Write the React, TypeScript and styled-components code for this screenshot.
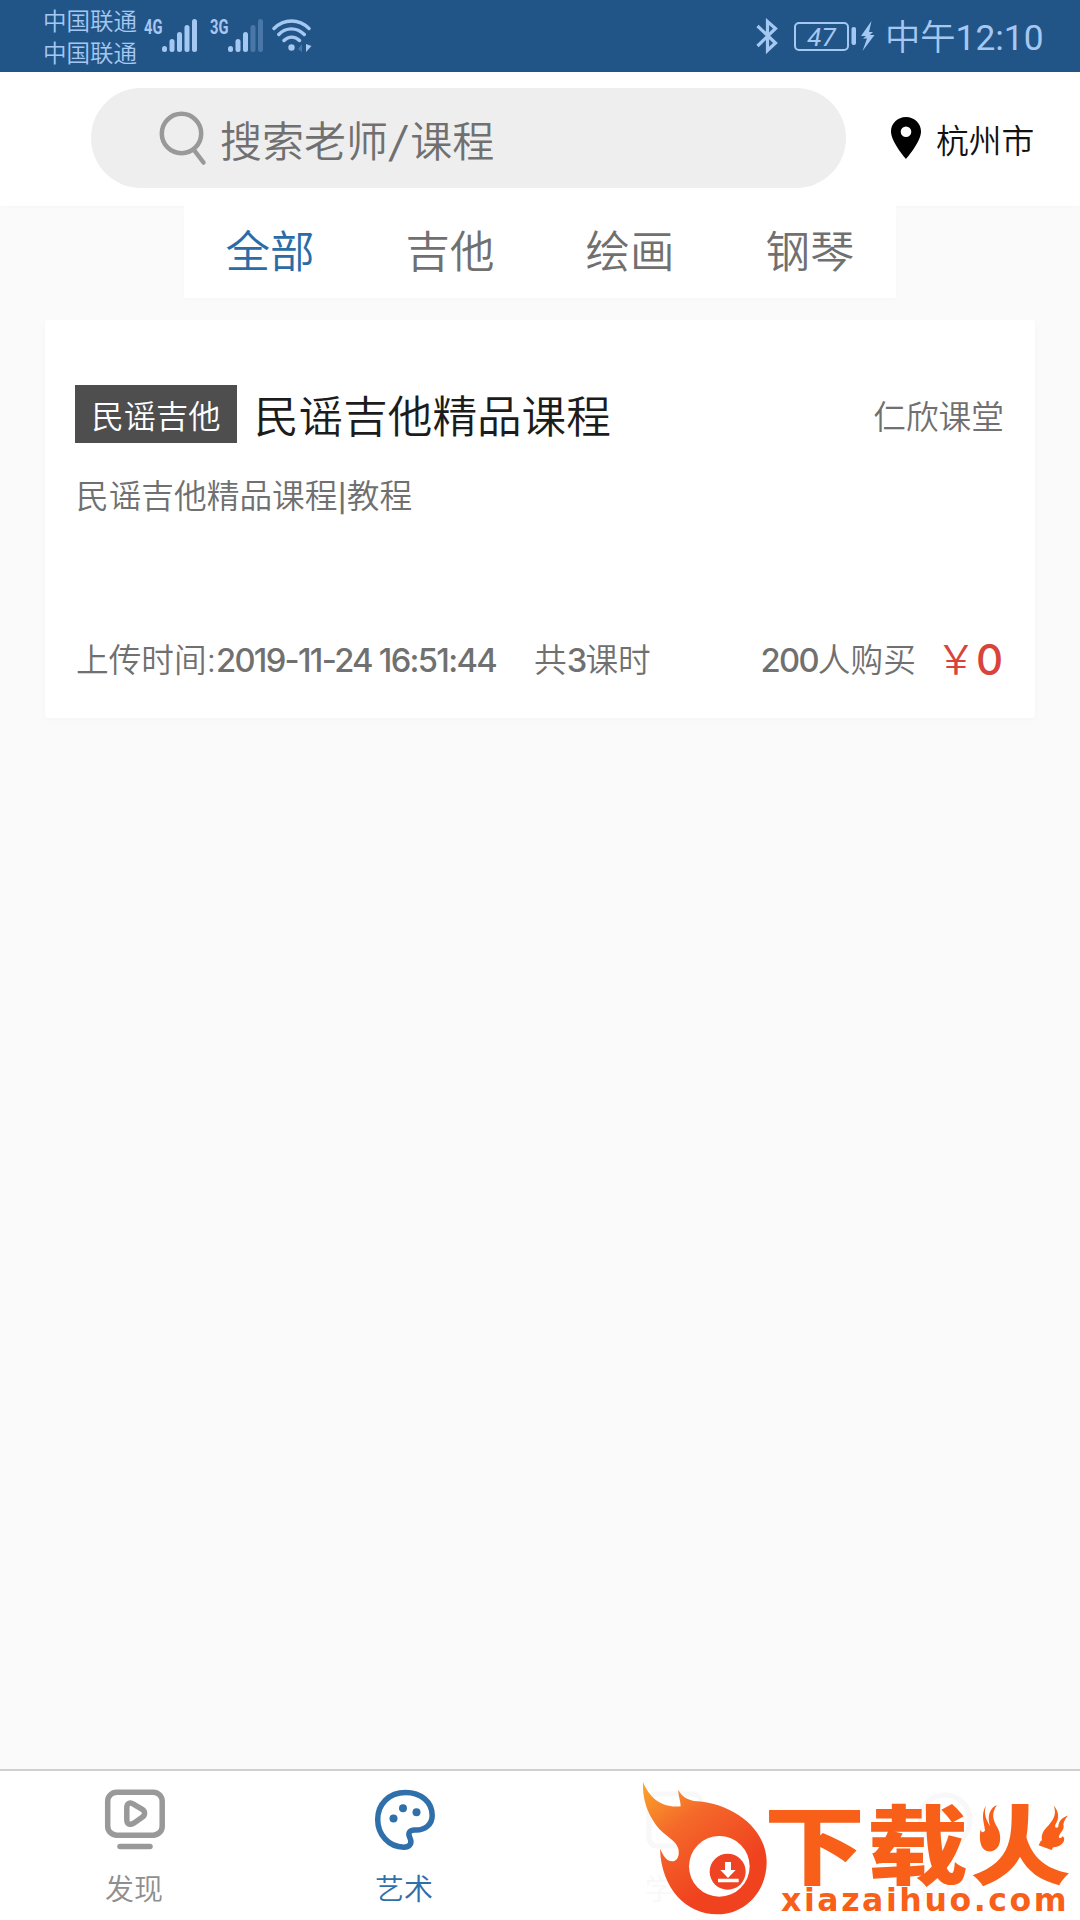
import styled, { createGlobalStyle } from 'styled-components';

const GlobalStyle = createGlobalStyle`
    * {
        box-sizing: border-box;
    }
    body {
        margin: 0;
        background: #fafafa;
        font-family: Inter, 'Noto Sans CJK SC', sans-serif;
        font-weight: 350;
    }
    svg {
        display: block;
        flex-shrink: 0;
    }
`;

const Screen = styled.div`
    width: 1080px;
    height: 1920px;
    display: flex;
    flex-direction: column;
    overflow: hidden;
    background: #fafafa;
`;

/* status bar */
const StatusBar = styled.div`
    height: 72px;
    padding: 0 36px 0 43px;
    display: flex;
    justify-content: space-between;
    align-items: center;
    background: #225587;
    color: #a5c8f2;
`;
const StatusGroup = styled.div`
    display: flex;
    align-items: center;
`;
const Carriers = styled.div`
    width: 101px;
    font-size: 23.5px;
    line-height: 32px;
    padding-top: 3px;
`;
const Signal = styled.div<{ $width: number }>`
    width: ${({ $width }) => $width}px;
    height: 34px;
    display: flex;
    align-items: flex-start;
`;
const Network = styled.span`
    width: 18px;
    font-family: Roboto, sans-serif;
    font-weight: 700;
    font-size: 21px;
    line-height: 17px;
    transform: scaleX(0.7);
    transform-origin: left;
`;
const Battery = styled.div`
    width: 55px;
    height: 29px;
    margin: 0 1px 0 16px;
    border: 2px solid #a5c8f2;
    border-radius: 5px;
    font-family: Roboto, sans-serif;
    font-weight: 400;
    font-size: 26px;
    line-height: 26px;
    font-style: italic;
    text-align: center;
`;
const Clock = styled.div`
    font-family: Roboto, 'Noto Sans CJK SC', sans-serif;
    font-size: 35.3px;
    line-height: 40px;
    font-weight: 350;
    margin: 4px 0 0 10px;
    width: 159px;
    white-space: nowrap;
`;
const Time = styled.span`
    font-weight: 400;
`;

/* search header */
const Header = styled.header`
    height: 134px;
    padding: 16px 40px 0 91px;
    display: flex;
    background: #fff;
    box-shadow: 0 1px 4px rgba(0, 0, 0, 0.02);
`;
const SearchBox = styled.div`
    width: 755px;
    height: 100px;
    padding: 0 0 0 67px;
    display: flex;
    align-items: center;
    gap: 12px;
    border-radius: 50px;
    background: #eee;
    color: #707070;
    font-size: 42px;
    line-height: 60px;
`;
const Placeholder = styled.span`
    padding-top: 7px;
    white-space: nowrap;
`;
const Slash = styled.span`
    display: inline-block;
    margin: 0 4px 0 3px;
    font-weight: 400;
    transform: skewX(-10deg);
`;
const City = styled.div`
    height: 100px;
    margin-left: 44px;
    display: flex;
    align-items: center;
    gap: 14px;
    color: #111;
    font-size: 32.8px;
    line-height: 50px;
    white-space: nowrap;
`;
const CityName = styled.span`
    padding-top: 5px;
`;

/* category tabs */
const Tabs = styled.nav`
    width: 712px;
    height: 92px;
    margin: 0 auto;
    display: flex;
    justify-content: center;
    background: #fff;
    box-shadow: 0 3px 6px rgba(0, 0, 0, 0.012);
    z-index: 1;
`;
const Tab = styled.span<{ $active?: boolean }>`
    width: 180px;
    flex-shrink: 0;
    text-align: center;
    font-size: 44.5px;
    line-height: 92px;
    color: ${({ $active }) => ($active ? '#2a6da6' : '#707070')};
`;

/* course card */
const Card = styled.article`
    width: 990px;
    height: 398px;
    margin: 22px 45px 0;
    padding: 65px 30px 0;
    background: #fff;
    border-radius: 4px;
    box-shadow: 0 3px 8px rgba(0, 0, 0, 0.02);
    color: #707070;
    font-size: 32.7px;
    line-height: 40px;
`;
const TitleRow = styled.div`
    height: 58px;
    display: flex;
    align-items: center;
`;
const Tag = styled.span`
    width: 162px;
    height: 58px;
    background: #4e4e4e;
    color: #fff;
    font-size: 32.3px;
    line-height: 64px;
    text-align: center;
`;
const Title = styled.h1`
    flex: 1;
    margin: 6px 0 0 17px;
    color: #1c1c1c;
    font-size: 44.6px;
    line-height: 58px;
    font-weight: 350;
`;
const Teacher = styled.span`
    margin: 5px 1px 0 0;
`;
const Desc = styled.p`
    margin: 33px 0 0 1px;
`;
const Divider = styled.span`
    font-size: 27px;
    font-weight: 500;
`;
const MetaRow = styled.div`
    height: 40px;
    margin: 121px 2px 0 1px;
    display: flex;
    align-items: center;
`;
const Num = styled.span`
    font-weight: 450;
    letter-spacing: -1.7px;
`;
const Lessons = styled.span`
    margin-left: 38px;
    flex: 1;
`;
const Price = styled.span`
    margin-left: 20px;
    display: flex;
    align-items: center;
    color: #d8443c;
    font-size: 40px;
`;
const Amount = styled.span`
    font-size: 42px;
    font-weight: 500;
`;

/* bottom bar */
const BottomBar = styled.footer`
    position: relative;
    height: 151px;
    margin-top: auto;
    display: grid;
    grid-template-columns: repeat(4, 1fr);
    background: #fff;
    border-top: 2px solid #cfcfcf;
`;
const NavItem = styled.div<{ $color: string; $faded?: boolean }>`
    padding-top: 18px;
    display: flex;
    flex-direction: column;
    align-items: center;
    gap: 19px;
    color: ${({ $color }) => $color};
    opacity: ${({ $faded }) => ($faded ? 0.06 : 1)};
    font-size: 29px;
    line-height: 40px;
`;
const NavLabel = styled.span`
    margin-right: 2px;
`;

/* logo lying over the last two nav items */
const Brand = styled.div`
    position: absolute;
    left: 640px;
    top: 10px;
    display: flex;
    color: #f8601a;
`;
const BrandText = styled.div`
    margin: 17px 0 0 -6px;
`;
const BrandName = styled.div`
    height: 84px;
    display: flex;
    font-family: 'Noto Sans CJK SC', sans-serif;
    font-weight: 900;
    font-size: 101px;
    letter-spacing: 2px;
    line-height: 84px;
    white-space: nowrap;
    transform: scaleY(0.86);
`;
/* the two dots are clipped off, the flames take their place */
const BrandFire = styled.span`
    clip-path: polygon(36% -10%, 63% -10%, 63% 46%, 100% 74%, 100% 120%, 0 120%, 0 74%, 36% 50%);
`;
const BrandFlames = styled.div`
    position: absolute;
    left: 337px;
    top: 21px;
`;
const BrandUrl = styled.div`
    margin: 3px 0 0 17px;
    font-family: 'DejaVu Sans', sans-serif;
    font-weight: 700;
    font-size: 31.5px;
    letter-spacing: 2.6px;
    line-height: 30px;
    white-space: nowrap;
`;

const Bars = ({ dim = 0 }: { dim?: number }) => (
    <svg width="36" height="34" viewBox="0 0 36 34" fill="currentColor">
        {[6, 13, 20, 27, 33].map((h, i) => (
            <rect key={h} x={i * 7.5} y={33 - h} width="5" height={h} rx="2.5" opacity={i >= 5 - dim ? 0.3 : 1} />
        ))}
    </svg>
);

const Wifi = () => (
    <svg width="40" height="34" viewBox="0 0 40 34" fill="none" stroke="currentColor" strokeWidth="3.4" strokeLinecap="round">
        <path d="M2 9.5C12-.5 27-.5 37 9.5M6.800 15.500c7-7.500 18-7.500 25.500 0M12 21.500c4.500-4.500 11-4.500 15.500 0" />
        <circle cx="19.500" cy="28.500" r="3.200" fill="currentColor" stroke="none" />
        <path d="M34 25v8l5.500-6z" fill="currentColor" stroke="none" />
        <path d="M30 25v8l-4-3z" fill="currentColor" stroke="none" opacity="0.3" />
    </svg>
);

const Bluetooth = () => (
    <svg width="22" height="36" viewBox="0 0 22 36" fill="none" stroke="currentColor" strokeWidth="3.2">
        <path d="M1.500 8 19.500 25 11.500 32.500V3.500l8 7L1.500 28" />
    </svg>
);

const BatteryTip = () => (
    <svg width="11" height="32" viewBox="0 0 11 32" fill="currentColor">
        <rect x="1.500" y="7" width="4.500" height="18" rx="2" />
    </svg>
);

const Charging = () => (
    <svg width="14" height="32" viewBox="0 0 14 32" fill="currentColor">
        <path d="M10.500 1 0 16h5l-3 2.500h4L1.500 31 13.500 15H8.800l3.200-3H8z" />
    </svg>
);

const SearchIcon = () => (
    <svg width="50" height="58" viewBox="0 0 50 58" fill="none" stroke="#999" strokeWidth="4.500" strokeLinecap="round">
        <circle cx="23.500" cy="24.500" r="19.700" />
        <path d="M36 41l9.500 12.500" />
    </svg>
);

const Pin = () => (
    <svg width="32" height="44" viewBox="0 0 32 44" fill="#000">
        <path
            fillRule="evenodd"
            d="M16 1C7.500 1 1 7.500 1 15.500 1 26 16 43 16 43s15-17 15-27.500C31 7.500 24.500 1 16 1Zm0 9.500a5.300 5.300 0 1 1 0 10.600 5.300 5.300 0 0 1 0-10.600Z"
        />
    </svg>
);

const DiscoverIcon = () => (
    <svg width="62" height="62" viewBox="0 0 62 62" fill="none" stroke="#999" strokeWidth="5.500" strokeLinecap="round">
        <rect x="3.700" y="3.200" width="54.500" height="43" rx="9" />
        <path d="M16 57.500h30" />
        <path d="M22.800 19c0-5 3-6 7-3.700l8.400 5c3.200 2.200 3.200 5.600 0 7.900l-8.400 6c-4 2.300-7 1-7-3.200z" strokeWidth="5.500" />
    </svg>
);

const ArtIcon = () => (
    <svg width="62" height="62" viewBox="0 0 62 62" fill="none" stroke="currentColor" strokeWidth="5.500">
        <path d="M31.500 3.500C15 3.500 3.700 15 3.700 30.500c0 15 11 27.700 26 27.700 6.500 0 8.600-4 6.300-9.200-2.300-4.500-1-8.300 5.500-8 9.500.3 16.700-5.500 16.700-14.500C58.200 13 47 3.500 31.500 3.500Z" />
        <g fill="currentColor" stroke="none">
            <circle cx="19.500" cy="29.500" r="4" />
            <circle cx="29" cy="19.300" r="4" />
            <circle cx="42.500" cy="23.200" r="4" />
        </g>
    </svg>
);

const StudyIcon = () => (
    <svg width="62" height="62" viewBox="0 0 62 62" fill="none" stroke="currentColor" strokeWidth="5">
        <rect x="5" y="5" width="52" height="52" rx="8" />
        <path d="M18 24h26M18 38h26" />
    </svg>
);

const MineIcon = () => (
    <svg width="62" height="62" viewBox="0 0 62 62" fill="none" stroke="currentColor" strokeWidth="5">
        <circle cx="31" cy="31" r="25" />
    </svg>
);

const FireLogo = () => (
    <svg width="130" height="138" viewBox="0 0 390 414">
        <defs>
            <linearGradient id="fire" x1="0" y1="0" x2="0.55" y2="0.8">
                <stop offset="0" stopColor="#fba62b" />
                <stop offset="0.45" stopColor="#f4682a" />
                <stop offset="1" stopColor="#f0421f" />
            </linearGradient>
        </defs>
        {/* flame with a hooked notch on its left side */}
        <path
            fill="url(#fire)"
            d="M9 3C28 50 65 82 122 76 122 58 114 44 115 26 124 46 142 58 172 61 277 69 378 140 380 241 381 331 315 400 232 400 140 400 64 324 60 203 69 222 78 240 97 241 113 240 119 222 115 203 108 176 73 166 48 132 20 92 7 52 9 3Z"
        />
        <circle cx="238" cy="256" r="91" fill="#fff" />
        <circle cx="263" cy="272" r="54" fill="#ee4423" />
        <path d="M255 243h18v24h14l-23 24-23-24h14zM234 293h62v11h-62z" fill="#fff" />
    </svg>
);

const Flames = () => (
    <svg width="93" height="52" viewBox="410 155 280 155" fill="currentColor">
        <path d="M437 165C420 195 432 215 434 240 429 248 423 246 421 237 415 265 420 303 448 303 480 303 488 262 472 232 458 208 452 190 470 163 446 174 440 200 450 228 436 205 430 190 437 165Z" />
        <path d="M641 165C650 190 642 205 625 225 610 240 604 250 605 266 608 292 650 300 668 278 676 268 672 260 668 257 660 266 655 264 657 256 662 245 675 235 670 222 672 210 680 200 684 195 668 200 655 212 655 228 650 235 643 232 646 222 658 205 658 185 641 165Z" />
    </svg>
);

export default function App() {
    return (
        <>
            <GlobalStyle />
            <Screen>
                <StatusBar>
                    <StatusGroup>
                        <Carriers>
                            中国联通
                            <br />
                            中国联通
                        </Carriers>
                        <Signal $width={66}>
                            <Network>4G</Network>
                            <Bars />
                        </Signal>
                        <Signal $width={62}>
                            <Network>3G</Network>
                            <Bars dim={2} />
                        </Signal>
                        <Wifi />
                    </StatusGroup>
                    <StatusGroup>
                        <Bluetooth />
                        <Battery>47</Battery>
                        <BatteryTip />
                        <Charging />
                        <Clock>
                            中午<Time>12:10</Time>
                        </Clock>
                    </StatusGroup>
                </StatusBar>

                <Header>
                    <SearchBox>
                        <SearchIcon />
                        <Placeholder>
                            搜索老师<Slash>/</Slash>课程
                        </Placeholder>
                    </SearchBox>
                    <City>
                        <Pin />
                        <CityName>杭州市</CityName>
                    </City>
                </Header>

                <Tabs>
                    <Tab $active>全部</Tab>
                    <Tab>吉他</Tab>
                    <Tab>绘画</Tab>
                    <Tab>钢琴</Tab>
                </Tabs>

                <Card>
                    <TitleRow>
                        <Tag>民谣吉他</Tag>
                        <Title>民谣吉他精品课程</Title>
                        <Teacher>仁欣课堂</Teacher>
                    </TitleRow>
                    <Desc>
                        民谣吉他精品课程<Divider>|</Divider>教程
                    </Desc>
                    <MetaRow>
                        <span>
                            上传时间:<Num>2019-11-24 16:51:44</Num>
                        </span>
                        <Lessons>
                            共<Num>3</Num>课时
                        </Lessons>
                        <span>
                            <Num>200</Num>人购买
                        </span>
                        <Price>
                            {'\uFFE5'}
                            <Amount>0</Amount>
                        </Price>
                    </MetaRow>
                </Card>

                <BottomBar>
                    <NavItem $color="#8f8f8f">
                        <DiscoverIcon />
                        <NavLabel>发现</NavLabel>
                    </NavItem>
                    <NavItem $color="#2f70aa">
                        <ArtIcon />
                        <NavLabel>艺术</NavLabel>
                    </NavItem>
                    <NavItem $color="#8f8f8f" $faded>
                        <StudyIcon />
                        <NavLabel>学习</NavLabel>
                    </NavItem>
                    <NavItem $color="#8f8f8f" $faded>
                        <MineIcon />
                        <NavLabel>我的</NavLabel>
                    </NavItem>
                    <Brand>
                        <FireLogo />
                        <BrandText>
                            <BrandName>
                                下载<BrandFire>火</BrandFire>
                            </BrandName>
                            <BrandUrl>xiazaihuo.com</BrandUrl>
                        </BrandText>
                        <BrandFlames>
                            <Flames />
                        </BrandFlames>
                    </Brand>
                </BottomBar>
            </Screen>
        </>
    );
}
